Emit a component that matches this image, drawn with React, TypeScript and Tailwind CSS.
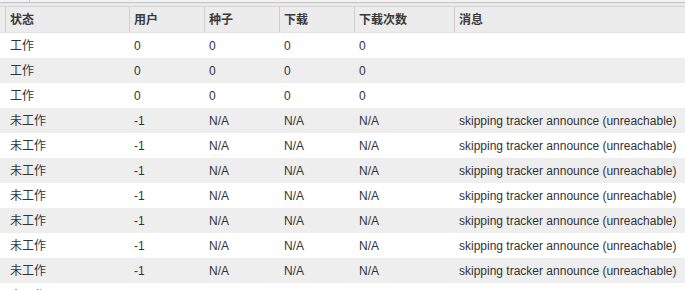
const cols = ['w-[124px]', 'w-[75px]', 'w-[75px]', 'w-[75px]', 'w-[100px]', 'flex-1'];

const headers = ['状态', '用户', '种子', '下载', '下载次数', '消息'];

const rows: string[][] = [
  ['工作', '0', '0', '0', '0', ''],
  ['工作', '0', '0', '0', '0', ''],
  ['工作', '0', '0', '0', '0', ''],
  ...Array.from({ length: 8 }, () => ['未工作', '-1', 'N/A', 'N/A', 'N/A', 'skipping tracker announce (unreachable)']),
];

export default function App() {
  return (
    <div className="w-[685px] h-[290px] overflow-hidden bg-white text-[12px] text-[#333] font-['Liberation_Sans','Noto_Sans_CJK_SC',sans-serif]">
      {/* top strip */}
      <div className="h-[2px] bg-[#f2f2f2] flex">
        <div className="w-[30px] border-r border-[#d0d0d0]" />
      </div>
      <div className="h-[1px] bg-[#c4c4c4]" />
      <div className="h-[3px] bg-[#e9e9e9]" />
      <div className="h-[1px] bg-[#d6d6d6]" />

      {/* header */}
      <div className="flex h-[26px] bg-[#ececec] border-b border-[#e2e2e2]">
        <div className="w-[6px] shrink-0 border-r border-[#cfcfcf]" />
        {headers.map((h, i) => (
          <div
            key={h}
            className={`${cols[i]} shrink-0 flex items-center pl-[4px] font-bold text-[#3a3a3a] ${i < 5 ? 'border-r border-[#cfcfcf]' : ''}`}
          >
            {h}
          </div>
        ))}
      </div>

      {/* body */}
      {rows.map((r, ri) => (
        <div key={ri} className={`flex h-[25px] ${ri % 2 === 1 ? 'bg-[#eeeeee]' : 'bg-white'}`}>
          <div className="w-[6px] shrink-0" />
          {r.map((c, ci) => (
            <div key={ci} className={`${cols[ci]} shrink-0 flex items-center pl-[4px] whitespace-nowrap ${ci < 5 ? 'border-r border-transparent' : ''}`}>
              {c}
            </div>
          ))}
        </div>
      ))}
    </div>
  );
}
